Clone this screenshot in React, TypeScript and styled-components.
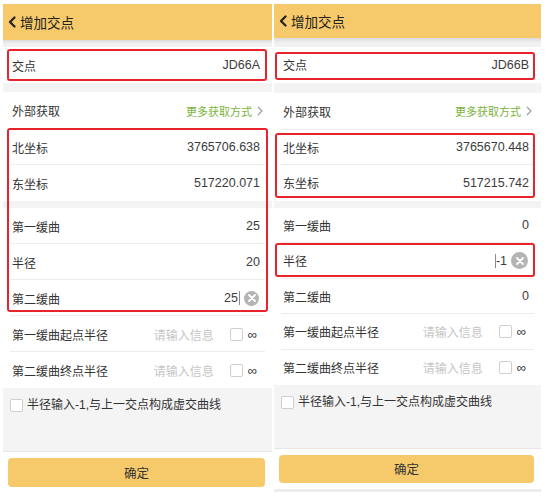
import React from 'react';
import styled, { createGlobalStyle } from 'styled-components';

const Global = createGlobalStyle`
  html, body { margin: 0; padding: 0; background: #fff; }
  body { font-family: "Liberation Sans", "Noto Sans CJK SC", sans-serif; color: #333; }
`;

const Page = styled.div`
  display: flex;
  gap: 2px;
  padding: 4px 0 0 3px;
  width: 547px;
  height: 496px;
  box-sizing: border-box;
  background: #fff;
`;

const Phone = styled.div<{ $w: number }>`
  width: ${(p) => p.$w}px;
  display: flex;
  flex-direction: column;
  background: #fff;
`;

const Header = styled.div<{ $h: number }>`
  height: ${(p) => p.$h}px;
  background: #f6c96b;
  display: flex;
  align-items: center;
  gap: 4px;
  padding-left: 5px;
  font-size: 13.5px;
  color: #222;
`;

const Strip = styled.div<{ $h: number }>`
  height: ${(p) => p.$h}px;
  background: linear-gradient(#dcdcdc, #f1f1f1 55%, #f3f3f3);
`;

const Gap = styled.div<{ $h: number }>`
  height: ${(p) => p.$h}px;
  background: #f3f3f3;
`;

const Row = styled.div<{ $h: number; $line?: boolean }>`
  position: relative;
  height: ${(p) => p.$h}px;
  box-sizing: border-box;
  display: flex;
  align-items: center;
  padding: 0 12px 0 9px;
  background: #fff;
  &::after {
    content: '';
    display: ${(p) => (p.$line ? 'block' : 'none')};
    position: absolute;
    left: 7px;
    right: 7px;
    bottom: 0;
    height: 1px;
    background: #ececec;
  }
`;

const Label = styled.span`
  font-size: 12px;
  color: #333;
  flex: 1;
`;

const Value = styled.span`
  font-size: 12.5px;
  color: #3c3c3c;
`;

const Link = styled.span`
  font-size: 11px;
  color: #7ab33c;
  display: flex;
  align-items: center;
  gap: 5px;
  margin-right: -3px;
`;

const Cursor = styled.span<{ $before?: boolean }>`
  width: 1px;
  height: 14px;
  background: #8a8a8a;
  margin: ${(p) => (p.$before ? '0' : '0 0 0 1px')};
`;

const Clear = styled.span<{ $size: number }>`
  width: ${(p) => p.$size}px;
  height: ${(p) => p.$size}px;
  border-radius: 50%;
  background: #b4b4b4;
  display: flex;
  align-items: center;
  justify-content: center;
  margin-left: 4px;
  margin-right: 1px;
`;

const Placeholder = styled.span`
  font-size: 12px;
  color: #c6c6c6;
`;

const Box = styled.span`
  width: 13px;
  height: 13px;
  box-sizing: border-box;
  border: 1px solid #cfcfcf;
  border-radius: 2px;
  background: #fff;
  flex: none;
`;

const Inf = styled.span`
  font-size: 13px;
  color: #333;
  margin-left: 5px;
  margin-right: 3px;
`;

const Tail = styled.span`
  display: flex;
  align-items: center;
  margin-left: 16px;
`;

const Marked = styled.div<{ $inset: string }>`
  position: relative;
  &::before {
    content: '';
    position: absolute;
    inset: ${(p) => p.$inset};
    border: 2px solid #e8232b;
    border-radius: 3px;
    pointer-events: none;
    z-index: 2;
  }
`;

const Bottom = styled.div<{ $h: number }>`
  height: ${(p) => p.$h}px;
  box-sizing: border-box;
  background: #f4f4f4;
  border-bottom: 1px solid #e6e6e6;
  padding: 11px 0 0 7px;
  display: flex;
  align-items: flex-start;
  gap: 4px;
`;

const Note = styled.span`
  font-size: 12px;
  color: #333;
  line-height: 13px;
`;

const Footer = styled.div<{ $line?: boolean }>`
  padding: 6px 7px 0 5px;
  background: #fff;
  & > div {
    margin-bottom: ${(p) => (p.$line ? '6px' : '0')};
  }
  border-bottom: ${(p) => (p.$line ? '3px solid #ececec' : 'none')};
`;

const Button = styled.div<{ $h: number }>`
  height: ${(p) => p.$h}px;
  background: #f6c96b;
  border-radius: 4px;
  display: flex;
  align-items: center;
  justify-content: center;
  font-size: 12.5px;
  color: #333;
`;

const Chevron = () => (
  <svg width="8" height="12" viewBox="0 0 8 12">
    <polyline points="6.5,1.5 2,6 6.5,10.5" fill="none" stroke="#222" strokeWidth="2.2" strokeLinecap="round" strokeLinejoin="round" />
  </svg>
);

const ChevronRight = () => (
  <svg width="6" height="10" viewBox="0 0 6 10">
    <polyline points="1,1 5,5 1,9" fill="none" stroke="#999" strokeWidth="1.1" />
  </svg>
);

const XIcon = () => (
  <svg width="8" height="8" viewBox="0 0 8 8">
    <path d="M1 1 L7 7 M7 1 L1 7" stroke="#fff" strokeWidth="1.8" strokeLinecap="round" />
  </svg>
);

type Cfg = {
  w: number;
  headerH: number;
  stripH: number;
  gapH: number;
  rowH: number;
  bottomH: number;
  btnH: number;
  id: string;
  north: string;
  east: string;
  first: string;
  radius: string;
  second: string;
  editing: 'second' | 'radius';
  clearSize: number;
  footerLine?: boolean;
  marks: { id: string; coords: string; curves?: string; radius?: string };
};

const EditValue = ({ value, before, size }: { value: string; before?: boolean; size: number }) => (
  <>
    {before && <Cursor $before />}
    <Value>{value}</Value>
    {!before && <Cursor />}
    <Clear $size={size}>
      <XIcon />
    </Clear>
  </>
);

const PhoneScreen = ({ c }: { c: Cfg }) => {
  const curveRows = (
    <>
      <Row $h={c.rowH} $line>
        <Label>第一缓曲</Label>
        <Value>{c.first}</Value>
      </Row>
      {c.marks.radius ? (
        <Marked $inset={c.marks.radius}>
          <Row $h={c.rowH} $line>
            <Label>半径</Label>
            <EditValue value={c.radius} before size={c.clearSize} />
          </Row>
        </Marked>
      ) : (
        <Row $h={c.rowH} $line>
          <Label>半径</Label>
          <Value>{c.radius}</Value>
        </Row>
      )}
      <Row $h={c.rowH} $line>
        <Label>第二缓曲</Label>
        {c.editing === 'second' ? <EditValue value={c.second} size={c.clearSize} /> : <Value>{c.second}</Value>}
      </Row>
    </>
  );

  const coordRows = (
    <>
      <Row $h={c.rowH} $line>
        <Label>北坐标</Label>
        <Value>{c.north}</Value>
      </Row>
      <Row $h={c.rowH}>
        <Label>东坐标</Label>
        <Value>{c.east}</Value>
      </Row>
    </>
  );

  return (
    <Phone $w={c.w}>
      <Header $h={c.headerH}>
        <Chevron />
        <span>增加交点</span>
      </Header>
      <Strip $h={c.stripH} />
      <Marked $inset={c.marks.id}>
        <Row $h={c.rowH}>
          <Label>交点</Label>
          <Value>{c.id}</Value>
        </Row>
      </Marked>
      <Gap $h={c.gapH} />
      <Row $h={37} $line>
        <Label>外部获取</Label>
        <Link>
          更多获取方式
          <ChevronRight />
        </Link>
      </Row>
      {c.marks.curves ? (
        <Marked $inset={c.marks.curves}>
          {coordRows}
          <Gap $h={7} />
          {curveRows}
        </Marked>
      ) : (
        <>
          <Marked $inset={c.marks.coords}>{coordRows}</Marked>
          <Gap $h={7} />
          {curveRows}
        </>
      )}
      <Row $h={c.rowH} $line>
        <Label>第一缓曲起点半径</Label>
        <Placeholder>请输入信息</Placeholder>
        <Tail>
          <Box />
          <Inf>∞</Inf>
        </Tail>
      </Row>
      <Row $h={c.rowH}>
        <Label>第二缓曲终点半径</Label>
        <Placeholder>请输入信息</Placeholder>
        <Tail>
          <Box />
          <Inf>∞</Inf>
        </Tail>
      </Row>
      <Bottom $h={c.bottomH}>
        <Box />
        <Note>半径输入-1,与上一交点构成虚交曲线</Note>
      </Bottom>
      <Footer $line={c.footerLine}>
        <Button $h={c.btnH}>确定</Button>
      </Footer>
    </Phone>
  );
};

const left: Cfg = {
  w: 269,
  headerH: 36,
  stripH: 7,
  gapH: 9,
  rowH: 36,
  bottomH: 64,
  btnH: 29,
  id: 'JD66A',
  north: '3765706.638',
  east: '517220.071',
  first: '25',
  radius: '20',
  second: '25',
  editing: 'second',
  clearSize: 15,
  marks: { id: '2px 5px 2px 4px', coords: '', curves: '-1px 4px 4px 4px' },
};

const right: Cfg = {
  w: 267,
  headerH: 34,
  stripH: 9,
  gapH: 10,
  rowH: 35.5,
  bottomH: 63.5,
  btnH: 28,
  id: 'JD66B',
  north: '3765670.448',
  east: '517215.742',
  first: '0',
  radius: '-1',
  second: '0',
  editing: 'radius',
  clearSize: 17,
  footerLine: true,
  marks: { id: '5px 6px 3px 1px', coords: '3px 6px 3px 1px', radius: '0px 6px 2px 1px' },
};

export default function App() {
  return (
    <>
      <Global />
      <Page>
        <PhoneScreen c={left} />
        <PhoneScreen c={right} />
      </Page>
    </>
  );
}
